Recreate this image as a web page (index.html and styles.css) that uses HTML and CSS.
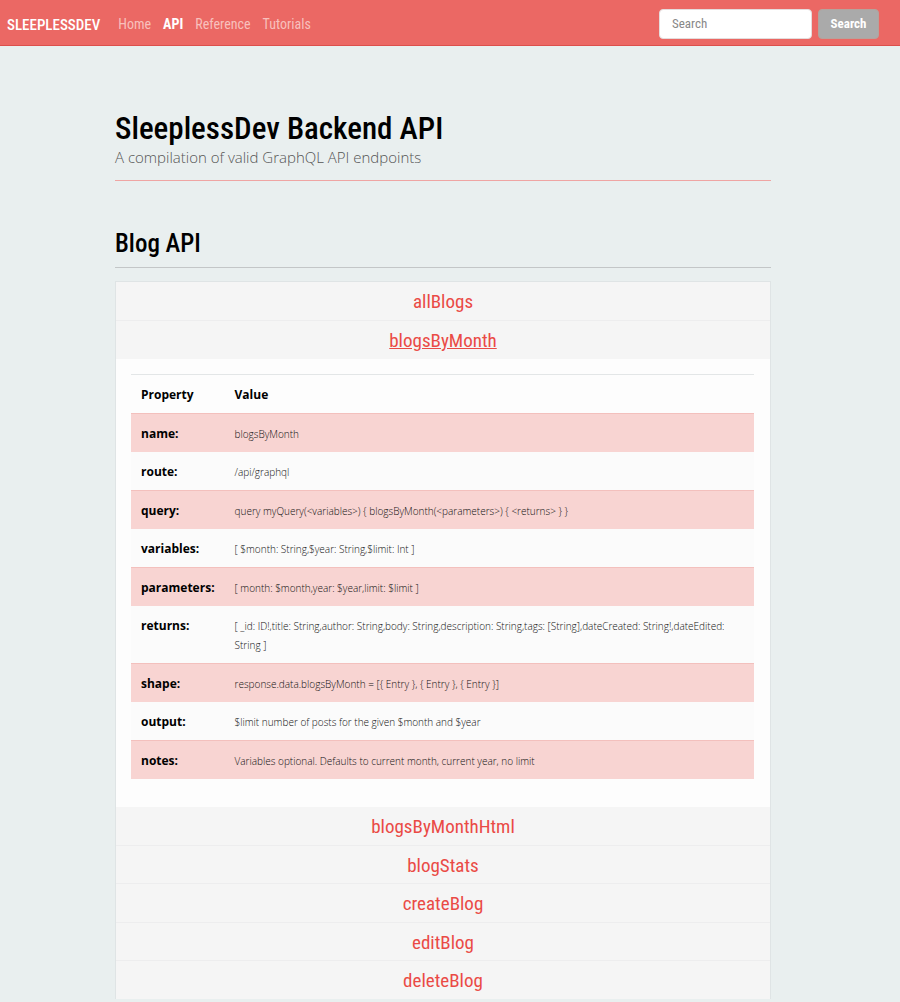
FILE: index.html
```html
<!DOCTYPE html>
<html lang="en">
<head>
<meta charset="utf-8">
<title>SleeplessDev Backend API</title>
<meta name="viewport" content="width=device-width, initial-scale=1">
<link rel="stylesheet" href="styles.css">
</head>
<body>
<header class="navbar">
  <a class="brand" href="#">SLEEPLESSDEV</a>
  <nav class="nav">
    <a class="nav-link" href="#">Home</a>
    <a class="nav-link active" href="#">API</a>
    <a class="nav-link" href="#">Reference</a>
    <a class="nav-link" href="#">Tutorials</a>
  </nav>
  <form class="search">
    <input class="search-input" type="search" placeholder="Search" aria-label="Search">
    <button class="search-button" type="button">Search</button>
  </form>
</header>
<main class="container">
  <h1 class="title">SleeplessDev Backend API</h1>
  <p class="subtitle">A compilation of valid GraphQL API endpoints</p>
  <h2 class="section-title">Blog API</h2>
  <section class="accordion">
    <h3 class="item"><a class="item-link" href="#">allBlogs</a></h3>
    <h3 class="item open"><a class="item-link" href="#">blogsByMonth</a></h3>
    <div class="panel">
      <table class="spec">
        <thead>
          <tr><th class="prop" scope="col">Property</th><th scope="col">Value</th></tr>
        </thead>
        <tbody>
          <tr><th scope="row">name:</th><td>blogsByMonth</td></tr>
          <tr><th scope="row">route:</th><td>/api/graphql</td></tr>
          <tr><th scope="row">query:</th><td>query myQuery(&lt;variables&gt;) { blogsByMonth(&lt;parameters&gt;) { &lt;returns&gt; } }</td></tr>
          <tr><th scope="row">variables:</th><td>[ $month: String,$year: String,$limit: Int ]</td></tr>
          <tr><th scope="row">parameters:</th><td>[ month: $month,year: $year,limit: $limit ]</td></tr>
          <tr><th scope="row">returns:</th><td>[ _id: ID!,title: String,author: String,body: String,description: String,tags: [String],dateCreated: String!,dateEdited: String ]</td></tr>
          <tr><th scope="row">shape:</th><td>response.data.blogsByMonth = [{ Entry }, { Entry }, { Entry }]</td></tr>
          <tr><th scope="row">output:</th><td>$limit number of posts for the given $month and $year</td></tr>
          <tr><th scope="row">notes:</th><td>Variables optional. Defaults to current month, current year, no limit</td></tr>
        </tbody>
      </table>
    </div>
    <h3 class="item"><a class="item-link" href="#">blogsByMonthHtml</a></h3>
    <h3 class="item"><a class="item-link" href="#">blogStats</a></h3>
    <h3 class="item"><a class="item-link" href="#">createBlog</a></h3>
    <h3 class="item"><a class="item-link" href="#">editBlog</a></h3>
    <h3 class="item"><a class="item-link" href="#">deleteBlog</a></h3>
  </section>
</main>
</body>
</html>
```
FILE: styles.css
```css
* { box-sizing: border-box; }

body {
  margin: 0;
  background: #e9efef;
  color: #000;
  font-family: "Open Sans", "Noto Sans", sans-serif;
}

.navbar,
.title,
.section-title,
.item,
.search-input,
.search-button {
  font-family: "Liberation Sans Narrow", "Roboto Condensed", "Open Sans Condensed", Roboto, sans-serif;
}

.navbar {
  display: flex;
  align-items: center;
  height: 46px;
  padding: 0 21px 0 7px;
  background: #eb6864;
  border-bottom: 1px solid #dc4f4b;
}

.brand {
  margin-right: 18px;
  padding-top: 4px;
  color: #fff;
  font-size: 15px;
  font-weight: 500;
  text-decoration: none;
}

.nav {
  display: flex;
  gap: 12px;
  padding-top: 3px;
}

.nav-link {
  color: #f8c0bd;
  font-size: 14px;
  font-weight: 400;
  text-decoration: none;
}

.nav-link.active {
  color: #fff;
  font-weight: 700;
}

.search {
  display: flex;
  gap: 6px;
  margin-left: auto;
  padding-top: 2px;
}

.search-input {
  width: 153px;
  height: 30px;
  padding: 0 12px;
  background: #fff;
  border: 1px solid #e4dcdc;
  border-radius: 4px;
  font-size: 13px;
}

.search-input::placeholder { color: #888; }

.search-button {
  width: 61px;
  height: 30px;
  padding: 0;
  background: #aaa;
  border: 1px solid #b5a39c;
  border-radius: 4px;
  color: #fff;
  font-size: 13px;
  font-weight: 700;
}

.container { padding: 64px 129px 3px 115px; }

.title {
  margin: 0;
  font-size: 31px;
  font-weight: 500;
  line-height: 38px;
}

.subtitle {
  margin: 0;
  padding-bottom: 14px;
  border-bottom: 1px solid #efa5a3;
  color: #555;
  font-size: 15px;
  font-weight: 300;
  line-height: 18px;
}

.section-title {
  margin: 47px 0 13px;
  padding-bottom: 7px;
  border-bottom: 1px solid #c3c6c7;
  font-size: 25px;
  font-weight: 500;
  line-height: 32px;
}

.accordion {
  background: #fdfdfd;
  border: 1px solid #dfe4e5;
  border-bottom: 0;
}

.item {
  margin: 0;
  padding-top: 2px;
  background: #f5f5f5;
  border-bottom: 1px solid #ededee;
  font-size: 19px;
  font-weight: 400;
  line-height: 36px;
  text-align: center;
}

.item:nth-of-type(even) { line-height: 35px; }
.item:last-child { border-bottom: 0; }

.item-link {
  color: #ea4a45;
  text-decoration: none;
}

.item.open { border-color: #f5f5f5; }
.item.open .item-link { text-decoration: underline; }

.panel { padding: 15px 16px 28px 15px; }

.spec {
  width: 100%;
  border-collapse: separate;
  border-spacing: 0;
  border-top: 1px solid #e3e6e7;
}

.spec th,
.spec td {
  padding: 10px 10px 9px;
  line-height: 19px;
  text-align: left;
  vertical-align: top;
}

.spec th {
  color: #000;
  font-size: 12px;
  font-weight: 700;
}

.spec .prop { width: 93px; }

.spec td {
  padding: 11px 10px 8px;
  color: #111;
  font-size: 10px;
  font-weight: 300;
}

.spec tbody tr:nth-child(odd) { background: #f8d4d2; }
.spec tbody tr:nth-child(even) { background: #fbfbfb; }

.spec tbody tr:nth-child(odd) > * { border-top: 1px solid #f3c0bd; }
```
